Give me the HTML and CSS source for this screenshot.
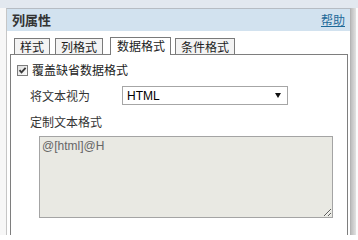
FILE: index.html
```html
<!DOCTYPE html>
<html lang="zh-CN">
<head>
<meta charset="utf-8">
<title>列属性</title>
<link rel="stylesheet" href="styles.css">
</head>
<body>
<div class="topband"></div>
<div class="stage">
  <div class="gutter-left"></div>
  <div class="dialog">
    <div class="header">
      <span class="title">列属性</span>
      <a class="help" href="#">帮助</a>
    </div>
    <div class="body">
      <div class="tabs">
        <span class="tab">样式</span>
        <span class="tab">列格式</span>
        <span class="tab selected">数据格式</span>
        <span class="tab last">条件格式</span>
      </div>
      <div class="panel">
        <label class="row check-row">
          <svg class="cb" width="11" height="11" viewBox="0 0 11 11">
            <defs>
              <linearGradient id="cbg" x1="0" y1="0" x2="1" y2="1">
                <stop offset="0" stop-color="#dcdcdc"/>
                <stop offset="1" stop-color="#ffffff"/>
              </linearGradient>
            </defs>
            <rect x="0.5" y="0.5" width="10" height="10" fill="url(#cbg)" stroke="#7c7c7c"/>
            <path d="M2.5 5.2 L4.5 7.4 L8.6 2.8" fill="none" stroke="#3a3a3a" stroke-width="1.8"/>
          </svg>
          <span class="check-label">覆盖缺省数据格式</span>
        </label>
        <div class="row field-row">
          <span class="field-label">将文本视为</span>
          <div class="select">
            <span class="select-text">HTML</span>
            <span class="arrow"></span>
          </div>
        </div>
        <div class="row caption">定制文本格式</div>
        <textarea class="fmt" readonly>@[html]@H</textarea>
      </div>
    </div>
  </div>
  <div class="shadow"></div>
  <div class="gutter-right"></div>
</div>
</body>
</html>
```
FILE: styles.css
```css
html, body {
  margin: 0;
  padding: 0;
}
body {
  width: 358px;
  height: 235px;
  overflow: hidden;
  background: #ffffff;
  font-family: "Noto Sans CJK SC", "Liberation Sans", sans-serif;
  font-size: 12px;
  color: #222;
}
.topband {
  height: 8px;
  background: #e2e8ef;
}
.stage {
  display: flex;
  height: 227px;
}
.gutter-left {
  width: 6px;
  background: #f7f7f7;
}
.dialog {
  width: 345px;
  box-sizing: border-box;
  border-left: 1px solid #c6c6c6;
  border-top: 1px solid #b6bcc3;
  border-right: 1px solid #b4b4b4;
  background: #ffffff;
  display: flex;
  flex-direction: column;
}
.header {
  height: 22px;
  background: #d2e2ef;
  display: flex;
  align-items: center;
  justify-content: space-between;
  padding: 0 5px;
}
.title {
  font-weight: bold;
  font-size: 13px;
  color: #333;
  line-height: 16px;
}
.help {
  color: #1e6a99;
  text-decoration: underline;
  font-size: 12px;
  line-height: 16px;
}
.body {
  flex: 1;
  display: flex;
  flex-direction: column;
  padding: 6px 2px 0 3px;
}
.tabs {
  display: flex;
  align-items: flex-end;
  height: 17px;
  padding-left: 4px;
}
.tab {
  box-sizing: border-box;
  height: 16px;
  line-height: 15px;
  padding: 0 5px;
  border: 1px solid #7a7a7a;
  border-bottom: none;
  background: #f3f3f3;
  color: #222;
  margin-right: 5px;
}
.tab.selected {
  height: 18px;
  line-height: 16px;
  margin-left: 2px;
  margin-right: 4px;
  margin-bottom: -1px;
  padding: 0 5px 0 6px;
  background: #ffffff;
  position: relative;
  z-index: 1;
}
.panel {
  flex: 1;
  border: 1px solid #7e7e7e;
  border-bottom: none;
  display: flex;
  flex-direction: column;
  padding-top: 7px;
}
.row {
  display: flex;
  align-items: center;
}
.check-row {
  height: 16px;
  padding-left: 6px;
}
.cb {
  flex: none;
  margin-right: 4px;
}
.check-label {
  line-height: 16px;
}
.field-row {
  margin-top: 8px;
  padding-left: 19px;
  height: 19px;
}
.field-label {
  width: 92px;
  line-height: 16px;
  color: #333;
}
.select {
  box-sizing: border-box;
  width: 166px;
  height: 19px;
  border: 1px solid #a6a6a6;
  background: #fff;
  display: flex;
  align-items: center;
  justify-content: space-between;
  padding: 0 6px 0 4px;
}
.select-text {
  font-family: "Liberation Sans", Arial, sans-serif;
  font-size: 12px;
  color: #000;
  line-height: 14px;
}
.arrow {
  width: 0;
  height: 0;
  border-left: 3px solid transparent;
  border-right: 3px solid transparent;
  border-top: 5px solid #111;
}
.caption {
  margin-top: 9px;
  padding-left: 19px;
  line-height: 16px;
  color: #333;
}
.fmt {
  box-sizing: border-box;
  display: block;
  margin: 6px 0 0 28px;
  width: 294px;
  height: 82px;
  border: 1px solid #a4a4a4;
  background: #e9e9e3;
  color: #666;
  font-family: "Liberation Sans", Arial, sans-serif;
  font-size: 12px;
  line-height: 14px;
  padding: 2px 2px;
  outline: none;
}
.shadow {
  width: 5px;
  background: linear-gradient(to right, #bdbdbd, #e2e2e2);
}
.gutter-right {
  flex: 1;
  background: #fbfbfb;
}
```
